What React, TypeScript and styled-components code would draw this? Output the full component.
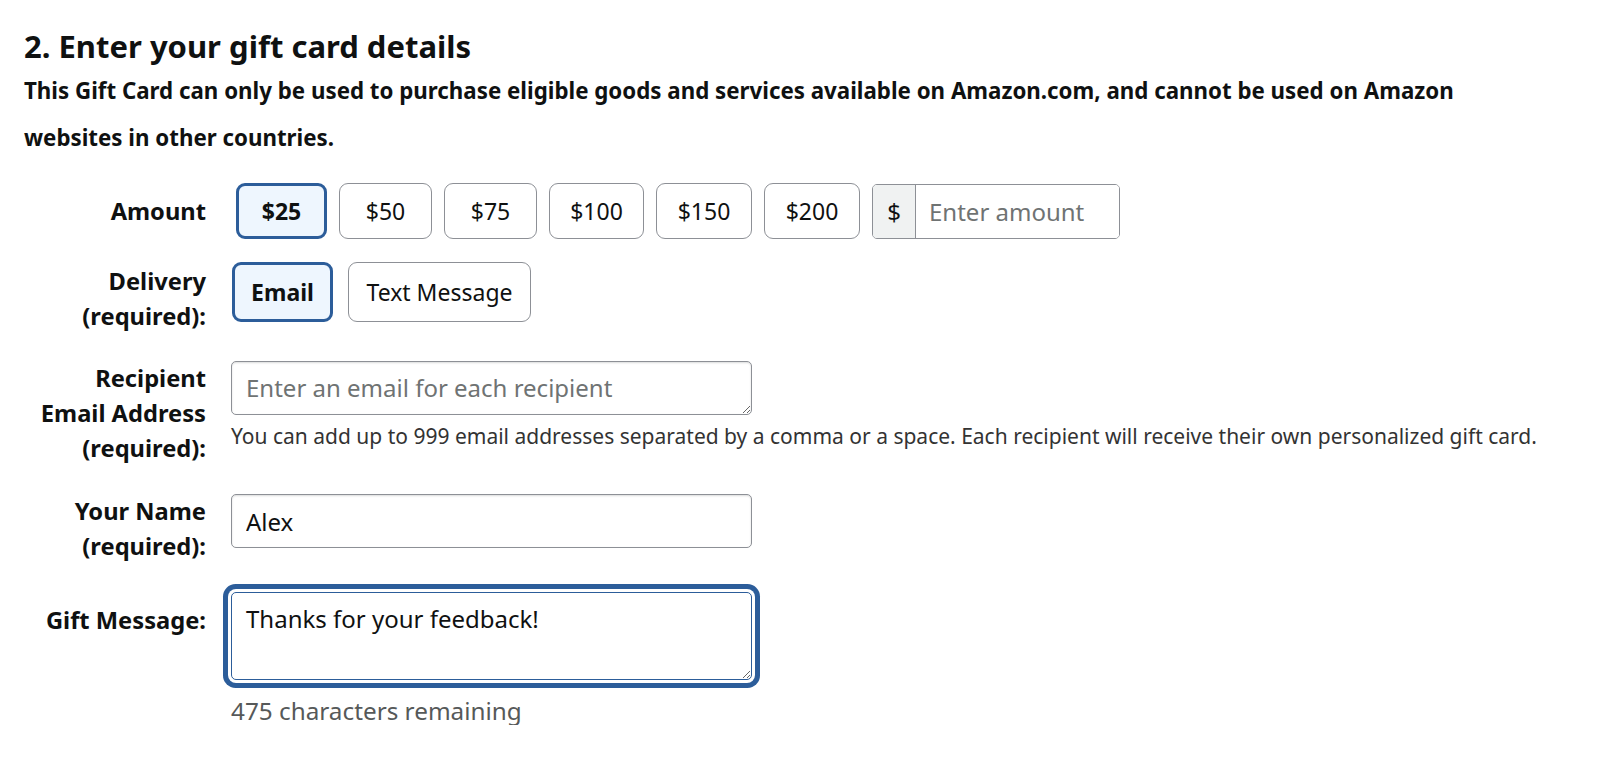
import React from "react";
import styled, { createGlobalStyle } from "styled-components";

const Global = createGlobalStyle`
  html, body { margin: 0; padding: 0; background: #fff; }
  body { font-family: "Noto Sans", "Open Sans", Arial, sans-serif; color: #0f1111; }
  * { box-sizing: border-box; }
`;

const Page = styled.div`
  padding: 28px 0 0 24px;
  width: 1600px;
`;

const Heading = styled.h2`
  margin: 0;
  font-size: 31px;
  line-height: 36px;
  font-weight: 700;
`;

const Notice = styled.p`
  margin: 3px 0 0;
  font-size: 22.3px;
  line-height: 47px;
  font-weight: 700;
  width: 1480px;
`;

const Form = styled.div`
  display: flex;
  flex-direction: column;
`;

const Row = styled.div<{ $mt: number; $align?: string }>`
  display: flex;
  align-items: ${(p) => p.$align || "flex-start"};
  margin-top: ${(p) => p.$mt}px;
`;

const Label = styled.div<{ $pt?: number }>`
  width: 182px;
  flex: none;
  text-align: right;
  font-size: 23.7px;
  font-weight: 700;
  line-height: 35px;
  padding-top: ${(p) => p.$pt || 0}px;
  white-space: nowrap;
`;

const Field = styled.div<{ $ml?: number }>`
  margin-left: ${(p) => p.$ml ?? 25}px;
  display: flex;
  flex-direction: column;
`;

const Choices = styled.div`
  display: flex;
  gap: 12px;
  align-items: center;
`;

const Choice = styled.button<{ $w: number; $h: number; $on?: boolean }>`
  width: ${(p) => p.$w}px;
  height: ${(p) => p.$h}px;
  border-radius: 9px;
  font-family: inherit;
  font-size: 23px;
  color: #0f1111;
  cursor: pointer;
  padding: 0;
  background: ${(p) => (p.$on ? "#eef6fe" : "#fff")};
  border: ${(p) => (p.$on ? "3px solid #2c5d9a" : "1px solid #8d9096")};
  font-weight: ${(p) => (p.$on ? 700 : 400)};
`;

const AmountGroup = styled.div`
  display: flex;
  height: 55px;
  width: 248px;
  border: 1px solid #8d9096;
  border-radius: 5px;
  overflow: hidden;
`;

const Prefix = styled.span`
  width: 43px;
  flex: none;
  background: #f0f2f2;
  border-right: 1px solid #8d9096;
  display: flex;
  align-items: center;
  justify-content: center;
  font-size: 24px;
`;

const AmountInput = styled.input`
  flex: 1;
  min-width: 0;
  border: none;
  outline: none;
  font-family: inherit;
  font-size: 24px;
  padding: 0 13px;
  color: #0f1111;
  &::placeholder { color: #6f7373; }
`;

const TextBox = styled.textarea<{ $h: number; $focus?: boolean }>`
  width: 521px;
  height: ${(p) => p.$h}px;
  border: 1px solid ${(p) => (p.$focus ? "#2c5d9a" : "#8d9096")};
  border-radius: 5px;
  font-family: inherit;
  font-size: 24px;
  line-height: 30px;
  padding: 11px 14px;
  color: #0f1111;
  resize: vertical;
  outline: none;
  box-shadow: ${(p) =>
    p.$focus ? "0 0 0 3px #fff, 0 0 0 8px #2c5d9a" : "inset 0 1px 2px rgba(15,17,17,0.15)"};
  &::placeholder { color: #6f7373; }
`;

const TextInput = styled.input`
  width: 521px;
  height: 54px;
  border: 1px solid #8d9096;
  border-radius: 5px;
  font-family: inherit;
  font-size: 24px;
  padding: 0 14px;
  color: #0f1111;
  outline: none;
  box-shadow: inset 0 1px 2px rgba(15,17,17,0.15);
`;

const Hint = styled.div<{ $size: number; $color: string; $mt: number }>`
  font-size: ${(p) => p.$size}px;
  color: ${(p) => p.$color};
  margin-top: ${(p) => p.$mt}px;
  line-height: 28px;
  white-space: nowrap;
`;

const amounts = ["$25", "$50", "$75", "$100", "$150", "$200"];
const widths = [91, 93, 93, 95, 96, 96];

export default function App() {
  return (
    <>
      <Global />
      <Page>
        <Heading>2. Enter your gift card details</Heading>
        <Notice>
          This Gift Card can only be used to purchase eligible goods and services available on Amazon.com, and cannot be used on Amazon websites in other countries.
        </Notice>
        <Form>
          <Row $mt={22} $align="center">
            <Label>Amount</Label>
            <Field $ml={30}>
              <Choices>
                {amounts.map((a, i) => (
                  <Choice key={a} $w={widths[i]} $h={56} $on={i === 0}>
                    {a}
                  </Choice>
                ))}
                <AmountGroup>
                  <Prefix>$</Prefix>
                  <AmountInput placeholder="Enter amount" />
                </AmountGroup>
              </Choices>
            </Field>
          </Row>
          <Row $mt={23}>
            <Label $pt={2}>
              Delivery
              <br />
              (required):
            </Label>
            <Field $ml={26}>
              <Choices>
                <Choice $w={101} $h={60} $on>
                  Email
                </Choice>
                <Choice $w={183} $h={60} style={{ marginLeft: 3 }}>
                  Text Message
                </Choice>
              </Choices>
            </Field>
          </Row>
          <Row $mt={27}>
            <Label>
              Recipient
              <br />
              Email Address
              <br />
              (required):
            </Label>
            <Field>
              <TextBox $h={54} placeholder="Enter an email for each recipient" />
              <Hint $size={21} $color="#333" $mt={7}>
                You can add up to 999 email addresses separated by a comma or a space. Each recipient will receive their own personalized gift card.
              </Hint>
            </Field>
          </Row>
          <Row $mt={28}>
            <Label>
              Your Name
              <br />
              (required):
            </Label>
            <Field>
              <TextInput defaultValue="Alex" />
            </Field>
          </Row>
          <Row $mt={28}>
            <Label $pt={11}>Gift Message:</Label>
            <Field>
              <TextBox $h={88} $focus defaultValue="Thanks for your feedback!" />
              <Hint $size={24.3} $color="#565959" $mt={17}>
                475 characters remaining
              </Hint>
            </Field>
          </Row>
        </Form>
      </Page>
    </>
  );
}
